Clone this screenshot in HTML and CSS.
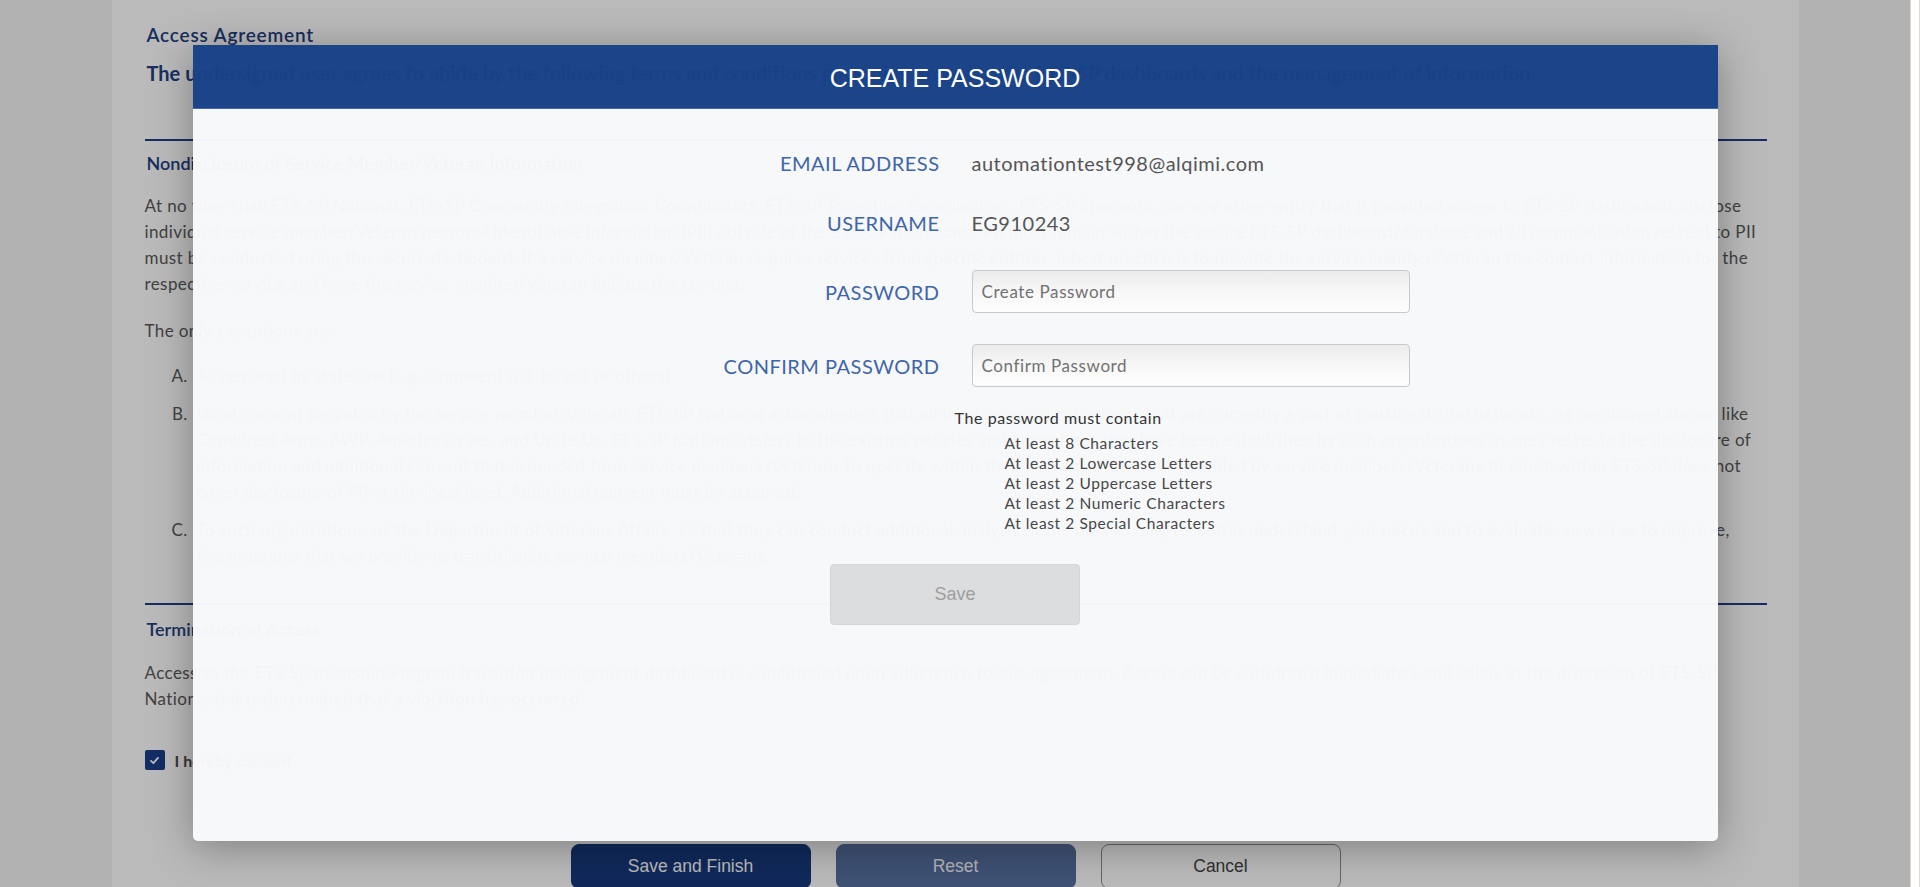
FILE: index.html
```html
<!DOCTYPE html>
<html lang="en">
<head>
<meta charset="utf-8">
<title>Access Agreement - Create Password</title>
<link rel="stylesheet" href="styles.css">
</head>
<body>
<div class="screen">
  <div class="viewport">
    <main class="page">
      <div class="page-container">
        <h2 class="doc-title">Access Agreement</h2>
        <p class="doc-lead">The undersigned user agrees to abide by the following terms and conditions governing access to the ETS-SP dashboards and the management of information.</p>
        <hr class="doc-rule">
        <h3 class="doc-heading">Nondisclosure of Service Member/Veteran Information</h3>
        <p class="doc-text">At no time shall ETS-SP National, ETS-SP Community Integration Coordinators, ETS-SP Transition Coordinators, ETS-SP Sponsors, nor any other entity that is provided access to ETS-SP dashboards disclose<br>individual service member/Veteran personal identifiable information (PII) outside of the ETS-SP dashboard. PII must remain within the secure ETS-SP dashboard/database and all communication related to PII<br>must be conducted using the secure dashboard. If a service member/Veteran requires services from specific entities, a best practice is to provide the service member/Veteran the contact information for the<br>respective service and have the service member/Veteran initiate the contact.</p>
        <p class="doc-text doc-text--gap">The only exceptions are:</p>
        <ol class="doc-list">
          <li>As required by state law (e.g., imminent risk to self or others)</li>
          <li>Local consent provided by the service member/Veteran. ETS-SP National acknowledges that all local community partners that are currently a part of existing digital networks, as mentioned above, like<br>Combined Arms, AWP, AmericaServes, and Unite Us. ETS-SP National defers to the existing policies and procedures that have been established by such organizations as they relate to the disclosure of<br>information and additional consent that is needed from service members/Veterans to operate within their networks. Consent provided by service members/Veterans to enroll within ETS-SP does not<br>cover disclosure of PII at the local level. Additional consent must be acquired.</li>
          <li>To such organizations, as the Department of Veterans Affairs, so that they can conduct additional analysis of the data to help us better understand your needs and to evaluate, as well as to improve,<br>the programs that we provide to transitioning service members/Veterans.</li>
        </ol>
        <hr class="doc-rule doc-rule--second">
        <h3 class="doc-heading doc-heading--second">Termination of Access</h3>
        <p class="doc-text doc-text--tight">Access to the ETS Sponsorship Program transition management dashboard is conditioned upon adherence to this agreement. Access can be withdrawn immediately and solely at the discretion of ETS-SP<br>National if it is determined that a violation has occurred.</p>
        <label class="consent">
          <span class="checkbox"><svg viewBox="0 0 12 12" width="11" height="11"><path d="M2.2 6.4 L4.8 8.8 L9.8 3.2" stroke="#fff" stroke-width="2" fill="none" stroke-linecap="round" stroke-linejoin="round"/></svg></span>
          <span>I hereby consent</span>
        </label>
        <div class="actions">
          <button class="btn btn-primary" type="button">Save and Finish</button>
          <button class="btn btn-secondary" type="button">Reset</button>
          <button class="btn btn-outline" type="button">Cancel</button>
        </div>
      </div>
    </main>
    <div class="backdrop"></div>
    <section class="modal" role="dialog" aria-labelledby="modal-title">
      <header class="modal-header">
        <h1 class="modal-title" id="modal-title">CREATE PASSWORD</h1>
      </header>
      <div class="modal-body">
        <div class="field-row">
          <span class="field-label">EMAIL ADDRESS</span>
          <span class="field-value">automationtest998@alqimi.com</span>
        </div>
        <div class="field-row field-row--text">
          <span class="field-label">USERNAME</span>
          <span class="field-value">EG910243</span>
        </div>
        <div class="field-row field-row--pass">
          <label class="field-label" for="pw">PASSWORD</label>
          <input class="field-input" id="pw" type="password" placeholder="Create Password">
        </div>
        <div class="field-row field-row--confirm">
          <label class="field-label" for="pw2">CONFIRM PASSWORD</label>
          <input class="field-input" id="pw2" type="password" placeholder="Confirm Password">
        </div>
        <div class="rules">
          <p class="rules-title">The password must contain</p>
          <ul class="rules-list">
            <li>At least 8 Characters</li>
            <li>At least 2 Lowercase Letters</li>
            <li>At least 2 Uppercase Letters</li>
            <li>At least 2 Numeric Characters</li>
            <li>At least 2 Special Characters</li>
          </ul>
        </div>
        <button class="btn-save" type="button" disabled>Save</button>
      </div>
    </section>
  </div>
  <div class="scroll-track"></div>
</div>
</body>
</html>
```

FILE: styles.css
```css
html, body {
  margin: 0;
  padding: 0;
}

body {
  font-family: Lato, "Liberation Sans", sans-serif;
  background: #ffffff;
}

.screen {
  display: flex;
  width: 1920px;
  height: 887px;
  overflow: hidden;
}

.viewport {
  position: relative;
  flex: 0 0 1910px;
  height: 887px;
  overflow: hidden;
  background: #f5f5f5;
}

.scroll-track {
  flex: 0 0 10px;
  box-sizing: border-box;
  background: #ffffff;
  border-left: 1px solid #e4d5cf;
  border-right: 1px solid #e4d5cf;
}

/* ---------- underlying page ---------- */

.page {
  height: 887px;
}

.page-container {
  width: 1687px;
  min-height: 887px;
  margin: 0 auto;
  box-sizing: border-box;
  padding: 23px 32px 0 33px;
  background: #ffffff;
}

.doc-title {
  margin: 0 0 0 2px;
  font-size: 19px;
  line-height: 24px;
  font-weight: 600;
  letter-spacing: 0.8px;
  color: #233f82;
}

.doc-lead {
  margin: 13px 0 0 2px;
  font-size: 20px;
  line-height: 26px;
  font-weight: 700;
  color: #233f82;
}

.doc-rule {
  margin: 53px 0 0;
  border: 0;
  border-top: 2px solid #1c3f8a;
  height: 0;
}

.doc-rule--second {
  margin-top: 34px;
}

.doc-heading {
  margin: 10px 0 0 2px;
  font-size: 18px;
  line-height: 24px;
  font-weight: 600;
  color: #233f82;
}

.doc-heading--second {
  margin-top: 12px;
}

.doc-text {
  margin: 18px 0 0;
  font-size: 17px;
  line-height: 26px;
  letter-spacing: 0.4px;
  color: #5a5a5a;
}

.doc-text--gap {
  margin-top: 21px;
}

.doc-text--tight {
  margin-top: 19px;
}

.doc-list {
  margin: 19px 0 0;
  padding-left: 48px;
  list-style: upper-alpha;
  font-size: 17px;
  line-height: 26px;
  letter-spacing: 0.4px;
  color: #5a5a5a;
}

.doc-list li {
  padding-left: 4px;
}

.doc-list li + li {
  margin-top: 12px;
}

.consent {
  display: flex;
  align-items: center;
  gap: 10px;
  margin-top: 38px;
  font-size: 16px;
  font-weight: 700;
  color: #4d4d4d;
}

.checkbox {
  display: flex;
  align-items: center;
  justify-content: center;
  width: 20px;
  height: 20px;
  border-radius: 2px;
  background: #1a3f8b;
}

.actions {
  display: flex;
  justify-content: center;
  gap: 25px;
  margin-top: 74px;
}

.btn {
  width: 240px;
  height: 45px;
  border-radius: 8px;
  font-family: "Liberation Sans", Arial, sans-serif;
  font-size: 17.5px;
  cursor: pointer;
}

.btn-primary {
  border: 1px solid #17397d;
  background: #17397d;
  color: #ffffff;
}

.btn-secondary {
  border: 1px solid #55709f;
  background: #55709f;
  color: #f4f6fa;
}

.btn-outline {
  border: 1px solid #8c8c8c;
  background: transparent;
  color: #444444;
}

/* ---------- backdrop & modal ---------- */

.backdrop {
  position: absolute;
  inset: 0;
  background: rgba(0, 0, 0, 0.27);
}

.modal {
  position: absolute;
  top: 45px;
  left: 0;
  right: 0;
  margin: 0 auto;
  width: 1525px;
  height: 796px;
  display: flex;
  flex-direction: column;
  border-radius: 0 0 5px 5px;
  overflow: hidden;
  box-shadow: 0 6px 40px rgba(0, 0, 0, 0.32);
}

.modal-header {
  flex: 0 0 64px;
  display: flex;
  align-items: center;
  justify-content: center;
  padding-top: 4px;
  background: rgba(24, 65, 136, 0.98);
  border-bottom: 1px solid rgba(70, 110, 175, 0.9);
  box-sizing: border-box;
}

.modal-title {
  margin: 0;
  font-family: "Liberation Sans", Arial, sans-serif;
  font-size: 25px;
  font-weight: 400;
  color: #ffffff;
}

.modal-body {
  flex: 1;
  padding-top: 32px;
  background: rgba(248, 249, 251, 0.98);
}

.field-row {
  display: grid;
  grid-template-columns: 747px 438px;
  column-gap: 32px;
  align-items: center;
  min-height: 43px;
}

.field-row--text {
  margin-top: 17px;
}

.field-row--pass {
  margin-top: 26px;
}

.field-row--confirm {
  margin-top: 31px;
}

.field-label {
  text-align: right;
  font-size: 20px;
  letter-spacing: 0.5px;
  color: #3f65a9;
}

.field-value {
  font-size: 20px;
  letter-spacing: 0.5px;
  color: #555555;
}

.field-input {
  width: 438px;
  height: 43px;
  box-sizing: border-box;
  padding: 0 9px;
  border: 1px solid #c9c9c9;
  border-radius: 4px;
  background: linear-gradient(to bottom, #ececec 0%, #f8f8f8 55%, #fdfdfd 100%);
  font-family: Lato, "Liberation Sans", sans-serif;
  font-size: 17px;
  letter-spacing: 0.6px;
  color: #555555;
  outline: none;
}

.field-input::placeholder {
  color: #717171;
}

.rules {
  margin: 21px 0 0 762px;
  color: #333333;
}

.rules-title {
  margin: 0 0 5px;
  font-size: 16px;
  line-height: 20px;
  letter-spacing: 0.6px;
}

.rules-list {
  margin: 0;
  padding-left: 50px;
  list-style: none;
  font-size: 15.5px;
  line-height: 20px;
  letter-spacing: 0.6px;
  color: #474747;
}

.btn-save {
  display: block;
  width: 250px;
  height: 61px;
  margin: 31px auto 0;
  border: 1px solid #d5d6d8;
  border-radius: 4px;
  background: #dcdddf;
  font-family: "Liberation Sans", Arial, sans-serif;
  font-size: 18px;
  color: #9e9e9e;
}
```
